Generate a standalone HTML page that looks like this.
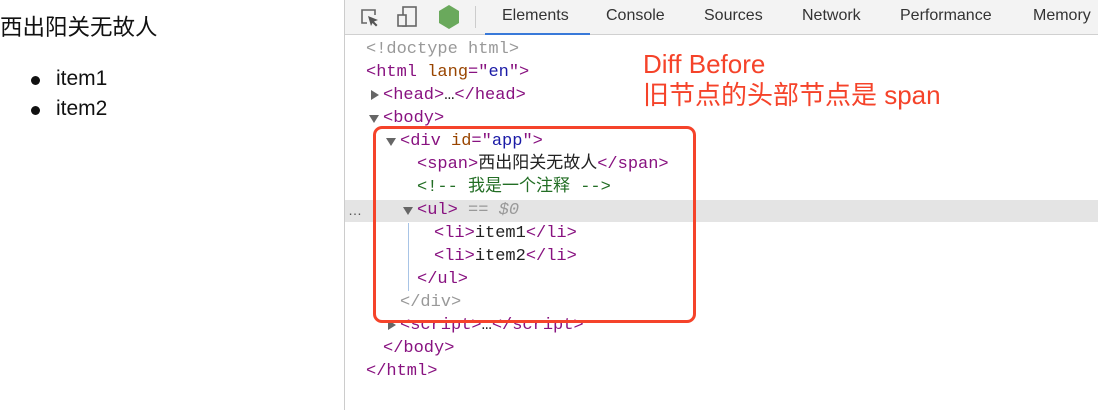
<!DOCTYPE html>
<html><head><meta charset="utf-8"><style>
*{margin:0;padding:0;box-sizing:border-box}
body{width:1098px;height:410px;background:#fff;position:relative;overflow:hidden;font-family:"Liberation Sans","Noto Sans CJK SC",sans-serif}
.left{position:absolute;left:0;top:0;width:345px;height:410px}
.t{position:absolute;font-size:21px;color:#111;white-space:nowrap}
.dot{position:absolute;width:9px;height:9px;border-radius:50%;background:#111}
.dev{position:absolute;left:344px;top:0;width:754px;height:410px;border-left:1px solid #ccc;background:#fff}
.tb{position:absolute;left:0;top:0;width:754px;height:35px;background:#f3f3f3;border-bottom:1px solid #d0d0d0}
.tab{position:absolute;top:7px;font-size:16px;color:#333}
.code{position:absolute;font-family:"Liberation Mono","Noto Sans CJK SC",monospace;font-size:17px;white-space:nowrap;color:#222;line-height:23px}
.g{color:#999}.p{color:#881280}.a{color:#994500}.v{color:#1a1aa6}.c{color:#236e25}
.arr{position:absolute;width:0;height:0}
.ad{border-left:5px solid transparent;border-right:5px solid transparent;border-top:8px solid #666}
.ar{border-top:5px solid transparent;border-bottom:5px solid transparent;border-left:8px solid #666}
</style></head><body>
<div class="left">
<div class="t" style="left:0;top:10px;font-size:22.5px">西出阳关无故人</div>
<div class="dot" style="left:31px;top:76px"></div><div class="t" style="left:56px;top:67px">item1</div>
<div class="dot" style="left:31px;top:106px"></div><div class="t" style="left:56px;top:97px">item2</div>
</div>
<div class="dev">
<div class="tb">
<svg style="position:absolute;left:14px;top:7px" width="22" height="22" viewBox="0 0 22 22"><path d="M8 16H3V3h13v5" fill="none" stroke="#666" stroke-width="1.6"/><path d="M9 9l10 4-4 1.5 3.5 3.5-1.5 1.5-3.5-3.5L12 19z" fill="#555"/></svg>
<svg style="position:absolute;left:51px;top:5px" width="22" height="24" viewBox="0 0 22 24"><rect x="7" y="2" width="13" height="19" fill="none" stroke="#666" stroke-width="1.6"/><rect x="2" y="10" width="8" height="11" fill="#f3f3f3" stroke="#666" stroke-width="1.6"/></svg>
<svg style="position:absolute;left:92px;top:4px" width="24" height="26" viewBox="0 0 24 26"><path d="M12 1l10 6v12l-10 6-10-6V7z" fill="#6aa95c"/></svg>
<div style="position:absolute;left:130px;top:6px;width:1px;height:22px;background:#ccc"></div>
<div class="tab" style="left:157px">Elements</div>
<div style="position:absolute;left:140px;top:33px;width:105px;height:2px;background:#3879d9"></div>
<div class="tab" style="left:261px">Console</div>
<div class="tab" style="left:359px">Sources</div>
<div class="tab" style="left:457px">Network</div>
<div class="tab" style="left:555px">Performance</div>
<div class="tab" style="left:688px">Memory</div>
</div>
<div style="position:absolute;left:0;top:200px;width:754px;height:22px;background:#e4e4e4"></div>
<div style="position:absolute;left:3px;top:202px;font-size:14px;color:#555">…</div>
<div style="position:absolute;left:63px;top:223px;width:1px;height:68px;background:#a8c4e6"></div>
<div class="code" style="left:21px;top:38px;">
<div class="g">&lt;!doctype html&gt;</div>
<div><span class="p">&lt;html </span><span class="a">lang</span><span class="p">="</span><span class="v">en</span><span class="p">"&gt;</span></div>
<div style="padding-left:17px"><span class="p">&lt;head&gt;</span>…<span class="p">&lt;/head&gt;</span></div>
<div style="padding-left:17px"><span class="p">&lt;body&gt;</span></div>
<div style="padding-left:34px"><span class="p">&lt;div </span><span class="a">id</span><span class="p">="</span><span class="v">app</span><span class="p">"&gt;</span></div>
<div style="padding-left:51px"><span class="p">&lt;span&gt;</span>西出阳关无故人<span class="p">&lt;/span&gt;</span></div>
<div style="padding-left:51px" class="c">&lt;!-- 我是一个注释 --&gt;</div>
<div style="padding-left:51px"><span class="p">&lt;ul&gt;</span> <span class="g">== <i>$0</i></span></div>
<div style="padding-left:68px"><span class="p">&lt;li&gt;</span>item1<span class="p">&lt;/li&gt;</span></div>
<div style="padding-left:68px"><span class="p">&lt;li&gt;</span>item2<span class="p">&lt;/li&gt;</span></div>
<div style="padding-left:51px"><span class="p">&lt;/ul&gt;</span></div>
<div style="padding-left:34px" class="g">&lt;/div&gt;</div>
<div style="padding-left:34px"><span class="p">&lt;script&gt;</span>…<span class="p">&lt;/script&gt;</span></div>
<div style="padding-left:17px"><span class="p">&lt;/body&gt;</span></div>
<div><span class="p">&lt;/html&gt;</span></div>
</div>
<div class="arr ar" style="left:26px;top:90px"></div>
<div class="arr ad" style="left:24px;top:115px"></div>
<div class="arr ad" style="left:41px;top:138px"></div>
<div class="arr ad" style="left:58px;top:207px"></div>
<div class="arr ar" style="left:43px;top:320px"></div>
<div style="position:absolute;left:28px;top:126px;width:323px;height:197px;border:3px solid #f5432a;border-radius:9px"></div>
<div style="position:absolute;left:298px;top:49px;font-size:26px;line-height:31px;color:#f5432a;white-space:nowrap">Diff Before<br>旧节点的头部节点是 span</div>
</div>
</body></html>
